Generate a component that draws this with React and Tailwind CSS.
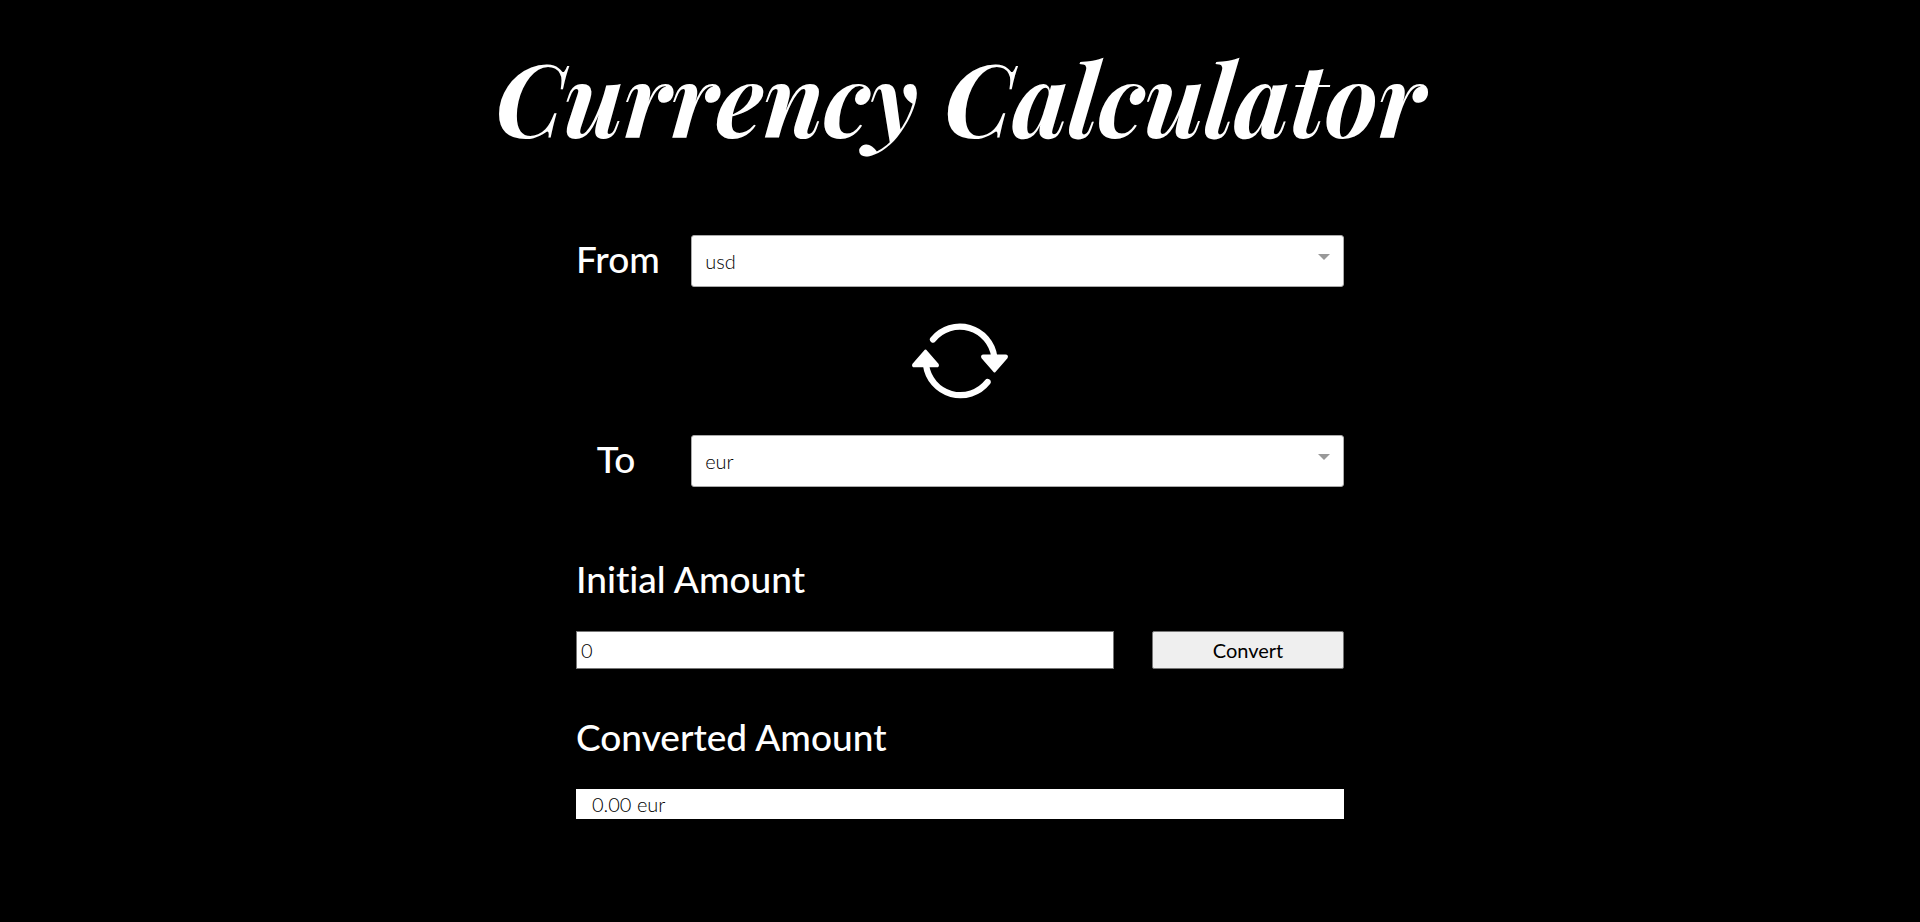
import { useState } from "react";

const currencies = ["usd", "eur", "gbp", "jpy"];

function CurrencyRow({ id, label, value, onChange }) {
  return (
    <div className="flex items-center">
      <div className="w-[15%] shrink-0 pb-1">
        <div className="w-20 text-center">
          <label htmlFor={id} className="text-[37px] leading-11 font-medium">
            {label}
          </label>
        </div>
      </div>
      <div className="relative flex-1">
        <select
          id={id}
          value={value}
          onChange={(event) => onChange(event.target.value)}
          className="block h-[52px] w-full appearance-none rounded-[3px] border border-[#aaa] bg-white px-[13px] text-xl font-light text-black"
        >
          {currencies.map((currency) => (
            <option key={currency}>{currency}</option>
          ))}
        </select>
        <svg
          viewBox="0 0 12 6"
          className="pointer-events-none absolute top-[19px] right-[14px] h-[6px] w-3 fill-[#999]"
          aria-hidden="true"
        >
          <path d="M0 0H12L6 6Z" />
        </svg>
      </div>
    </div>
  );
}

function SwapIcon() {
  return (
    <svg viewBox="0 0 96 76" className="h-[76px] w-24" fill="none" aria-hidden="true">
      <g stroke="white" strokeWidth="6.200" strokeLinecap="round">
        <path d="M21 16.500A34.700 34.700 0 0 1 82.300 34" />
        <path d="M14 42A34.700 34.700 0 0 0 75.600 59" />
      </g>
      <g fill="white" stroke="white" strokeWidth="2" strokeLinejoin="round">
        <path d="M13.500 27.500L1.300 41.500Q0.500 43.300 2.500 43.300H24.500Q26.500 43.300 25.700 41.500Z" />
        <path d="M82.500 48.500L70.300 34.500Q69.500 32.500 71.500 32.500H93.500Q95.500 32.500 94.700 34.500Z" />
      </g>
    </svg>
  );
}

export default function App() {
  const [from, setFrom] = useState("usd");
  const [to, setTo] = useState("eur");
  const [amount, setAmount] = useState("0");
  const [result, setResult] = useState("0.00");

  const swap = () => {
    setFrom(to);
    setTo(from);
  };

  const convert = (event) => {
    event.preventDefault();
    setResult(Number(amount).toFixed(2));
  };

  return (
    <main className="flex min-h-screen flex-col items-center bg-black pt-8 font-['Lato',sans-serif] text-white [font-variant-ligatures:none]">
      <h1 className="font-['Playfair_Display','Liberation_Serif',serif] text-[100px] leading-[130px] font-bold italic">
        Currency Calculator
      </h1>
      <form onSubmit={convert} className="mt-[73px] w-2/5">
        <CurrencyRow id="from" label="From" value={from} onChange={setFrom} />
        <div className="flex justify-center py-9">
          <button type="button" onClick={swap} aria-label="Swap currencies">
            <SwapIcon />
          </button>
        </div>
        <CurrencyRow id="to" label="To" value={to} onChange={setTo} />
        <label htmlFor="amount" className="mt-[70px] block text-[37px] leading-11 font-medium">
          Initial Amount
        </label>
        <div className="mt-[30px] flex justify-between">
          <input
            id="amount"
            type="text"
            inputMode="decimal"
            value={amount}
            onChange={(event) => setAmount(event.target.value)}
            className="h-[38px] w-[70%] border border-[#767676] bg-white px-1 text-xl font-light text-black"
          />
          <button
            type="submit"
            className="h-[38px] w-1/4 rounded-xs border border-[#767676] bg-[#efefef] text-xl text-black"
          >
            Convert
          </button>
        </div>
        <label htmlFor="result" className="mt-[46px] block text-[37px] leading-11 font-medium">
          Converted Amount
        </label>
        <output
          id="result"
          className="mt-[30px] block h-[30px] bg-white px-4 text-xl leading-[30px] font-light text-black"
        >
          {result} {to}
        </output>
      </form>
    </main>
  );
}
